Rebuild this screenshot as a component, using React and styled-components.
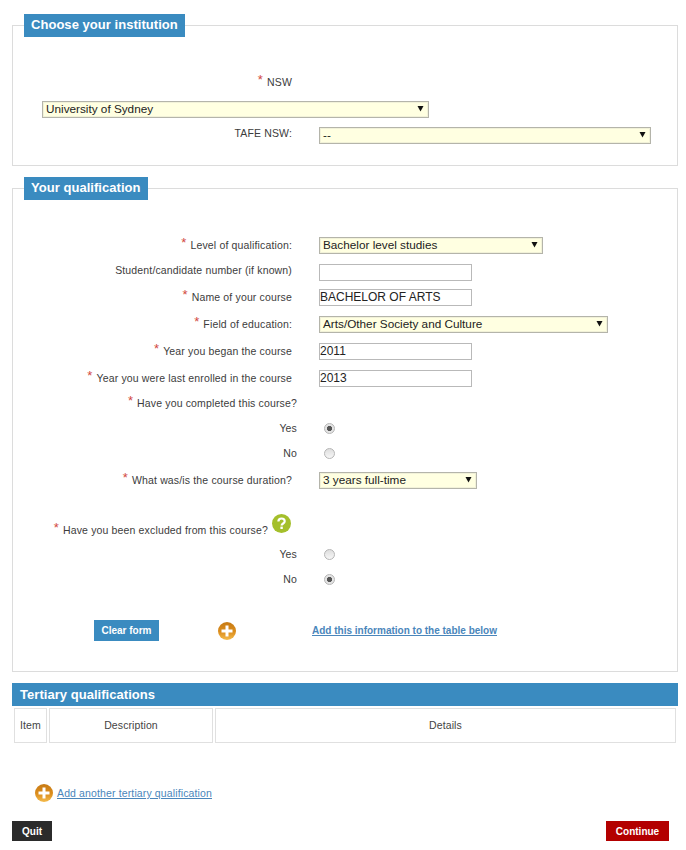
// App.jsx
import React from "react";
import styled, { createGlobalStyle } from "styled-components";

const GlobalStyle = createGlobalStyle`
  body {
    margin: 0;
    background: #fff;
    color: #333;
    font-family: "Liberation Sans", Arial, sans-serif;
    font-size: 11px;
  }
`;

const Page = styled.div`
  width: 666px;
  height: 850px;
  padding-left: 12px;
  overflow: hidden;
`;

const Panel = styled.fieldset`
  box-sizing: border-box;
  width: 666px;
  margin: ${(p) => p.$top}px 0 0;
  padding: 0 0 ${(p) => p.$bottom}px;
  border: 1px solid #dcdcdc;
  min-width: 0;
`;

const PanelTitle = styled.legend`
  box-sizing: border-box;
  height: 23px;
  margin-left: 11px;
  padding: 0 7px;
  background: #3a8bc0;
  color: #fff;
  font-size: 13px;
  font-weight: bold;
  letter-spacing: 0.04px;
  line-height: 22px;
`;

const Row = styled.div`
  display: grid;
  grid-template-columns: 279px 1fr;
  column-gap: 27px;
  align-items: center;
  min-height: 17px;
  margin-top: ${(p) => p.$top}px;
`;

const Label = styled.label`
  justify-self: end;
  display: flex;
  align-items: center;
  margin-right: ${(p) => p.$shift || 0}px;
  padding-bottom: ${(p) => (p.$raised ? 5 : 2)}px;
  white-space: nowrap;
  font-size: 10.5px;
  letter-spacing: 0.15px;
  color: #3c3c3c;
`;

const Star = styled.span`
  color: #d2483e;
  font-size: 13px;
  line-height: 10px;
  margin-right: 4px;
  position: relative;
  top: -2px;
`;

const WideSelectRow = styled.div`
  margin: ${(p) => p.$top}px 0 0 29px;
`;

const SelectBox = styled.div`
  box-sizing: border-box;
  display: flex;
  align-items: center;
  justify-content: space-between;
  width: ${(p) => p.$width}px;
  height: 17px;
  padding: 0 4px 2px 3px;
  background: #ffffe1;
  border: 1px solid #b4b4aa;
  box-shadow: inset 0 0 0 1px #f1f1d8;
  font-size: 11.75px;
  color: #222;
`;

const TextBox = styled.input`
  box-sizing: border-box;
  display: block;
  width: 153px;
  height: 17px;
  padding: 0 0 2px;
  background: #fff;
  border: 1px solid #b9b9b9;
  font-family: inherit;
  font-size: 12px;
  color: #222;
  outline: none;
`;

const Radio = styled.span`
  display: block;
  box-sizing: border-box;
  width: 11px;
  height: 11px;
  margin-left: 5px;
  border-radius: 50%;
  border: 1px solid #b5b5b5;
  background: ${(p) =>
    p.$checked
      ? "radial-gradient(circle, #555 0 2.4px, #e4e4e4 2.9px)"
      : "linear-gradient(#dedede, #f6f6f6)"};
`;

const Actions = styled.div`
  display: flex;
  align-items: center;
  height: 21px;
  margin: 32px 0 0 81px;
`;

const Button = styled.div`
  display: flex;
  align-items: center;
  justify-content: center;
  width: ${(p) => p.$width}px;
  height: ${(p) => p.$height || 21}px;
  background: ${(p) => p.$bg};
  color: #fff;
  font-size: 10px;
  font-weight: bold;
`;

const ActionLink = styled.a`
  color: #4a86bb;
  font-size: ${(p) => (p.$bold ? 10 : 10.5)}px;
  font-weight: ${(p) => (p.$bold ? "bold" : "normal")};
  letter-spacing: ${(p) => (p.$bold ? 0 : 0.13)}px;
  text-decoration: underline;
`;

const IconWrap = styled.span`
  display: flex;
  margin: ${(p) => p.$margin};
`;

const TableTitle = styled.div`
  box-sizing: border-box;
  height: 23px;
  margin-top: 11px;
  padding-left: 8px;
  background: #3a8bc0;
  color: #fff;
  font-size: 13px;
  font-weight: bold;
  letter-spacing: 0.04px;
  line-height: 23px;
`;

const QualTable = styled.div`
  display: grid;
  grid-template-columns: 33px 164px 461px;
  column-gap: 2px;
  height: 35px;
  margin-top: 2px;
  padding: 0 2px;
`;

const Cell = styled.div`
  display: flex;
  align-items: center;
  justify-content: center;
  padding-bottom: 2px;
  border: 1px solid #e0e0e0;
  font-size: 10.5px;
  letter-spacing: 0.1px;
  color: #444;
`;

const AddAnother = styled.div`
  display: flex;
  align-items: center;
  gap: 4px;
  height: 18px;
  margin: 41px 0 0 23px;
`;

const Footer = styled.div`
  display: flex;
  justify-content: space-between;
  margin-top: 19px;
  padding-right: 9px;
`;

function Arrow() {
  return (
    <svg width="7" height="7" viewBox="0 0 7 7">
      <path d="M0.5 1H6.5L3.5 6.5Z" fill="#111" />
    </svg>
  );
}

function Select({ width, children }) {
  return (
    <SelectBox $width={width}>
      <span>{children}</span>
      <Arrow />
    </SelectBox>
  );
}

function PlusIcon() {
  return (
    <svg width="18" height="18" viewBox="0 0 18 18">
      <defs>
        <linearGradient id="plusFill" x1="0" y1="0" x2="0" y2="1">
          <stop offset="0" stopColor="#c77a14" />
          <stop offset="0.55" stopColor="#dc8e1e" />
          <stop offset="1" stopColor="#f4bb4c" />
        </linearGradient>
      </defs>
      <circle cx="9" cy="9" r="9" fill="url(#plusFill)" />
      <path d="M7.5 3.5H10.5V7.5H14.5V10.5H10.5V14.5H7.5V10.5H3.5V7.5H7.5Z" fill="#fff" />
    </svg>
  );
}

function HelpIcon() {
  return (
    <svg width="19" height="19" viewBox="0 0 19 19">
      <circle cx="9.5" cy="9.5" r="9.5" fill="#a4bf2b" />
      <path
        d="M6.4 7.6C6.4 5.6 7.8 4.5 9.6 4.5C11.4 4.5 12.7 5.6 12.7 7.2C12.7 9.6 9.6 9.4 9.6 11.6"
        fill="none"
        stroke="#fff"
        strokeWidth="2.2"
      />
      <rect x="8.4" y="12.6" width="2.4" height="2.4" fill="#fff" />
    </svg>
  );
}

function Field({ top, required, shift, raised, label, children }) {
  return (
    <Row $top={top}>
      <Label $shift={shift} $raised={raised}>
        {required && <Star>*</Star>}
        {label}
      </Label>
      <div>{children}</div>
    </Row>
  );
}

export default function App() {
  return (
    <Page>
      <GlobalStyle />
      <Panel $top={14} $bottom={21}>
        <PanelTitle>Choose your institution</PanelTitle>
        <Field top={37} required label="NSW" />
        <WideSelectRow $top={10}>
          <Select width={387}>University of Sydney</Select>
        </WideSelectRow>
        <Field top={9} raised label="TAFE NSW:">
          <Select width={332}>--</Select>
        </Field>
      </Panel>

      <Panel $top={11} $bottom={30}>
        <PanelTitle>Your qualification</PanelTitle>
        <Field top={37} required label="Level of qualification:">
          <Select width={224}>Bachelor level studies</Select>
        </Field>
        <Field top={10} raised label="Student/candidate number (if known)">
          <TextBox readOnly value="" />
        </Field>
        <Field top={8} required label="Name of your course">
          <TextBox readOnly value="BACHELOR OF ARTS" />
        </Field>
        <Field top={10} required label="Field of education:">
          <Select width={289}>Arts/Other Society and Culture</Select>
        </Field>
        <Field top={10} required label="Year you began the course">
          <TextBox readOnly value="2011" />
        </Field>
        <Field top={10} required label="Year you were last enrolled in the course">
          <TextBox readOnly value="2013" />
        </Field>
        <Field top={8} required shift={-5} label="Have you completed this course?" />
        <Field top={8} shift={-5} label="Yes">
          <Radio $checked />
        </Field>
        <Field top={8} shift={-5} label="No">
          <Radio />
        </Field>
        <Field top={10} required label="What was/is the course duration?">
          <Select width={158}>3 years full-time</Select>
        </Field>
        <Row $top={33}>
          <Label>
            <Star>*</Star>
            Have you been excluded from this course?
            <IconWrap $margin="-12px 1px 0 4px">
              <HelpIcon />
            </IconWrap>
          </Label>
          <div />
        </Row>
        <Field top={7} shift={-5} label="Yes">
          <Radio />
        </Field>
        <Field top={8} shift={-5} label="No">
          <Radio $checked />
        </Field>
        <Actions>
          <Button $width={65} $bg="#3a8bc0">Clear form</Button>
          <IconWrap $margin="0 76px 0 59px">
            <PlusIcon />
          </IconWrap>
          <ActionLink $bold>Add this information to the table below</ActionLink>
        </Actions>
      </Panel>

      <TableTitle>Tertiary qualifications</TableTitle>
      <QualTable>
        <Cell>Item</Cell>
        <Cell>Description</Cell>
        <Cell>Details</Cell>
      </QualTable>

      <AddAnother>
        <PlusIcon />
        <ActionLink>Add another tertiary qualification</ActionLink>
      </AddAnother>

      <Footer>
        <Button $width={40} $height={20} $bg="#2b2b2b">Quit</Button>
        <Button $width={63} $height={20} $bg="#b30000">Continue</Button>
      </Footer>
    </Page>
  );
}
